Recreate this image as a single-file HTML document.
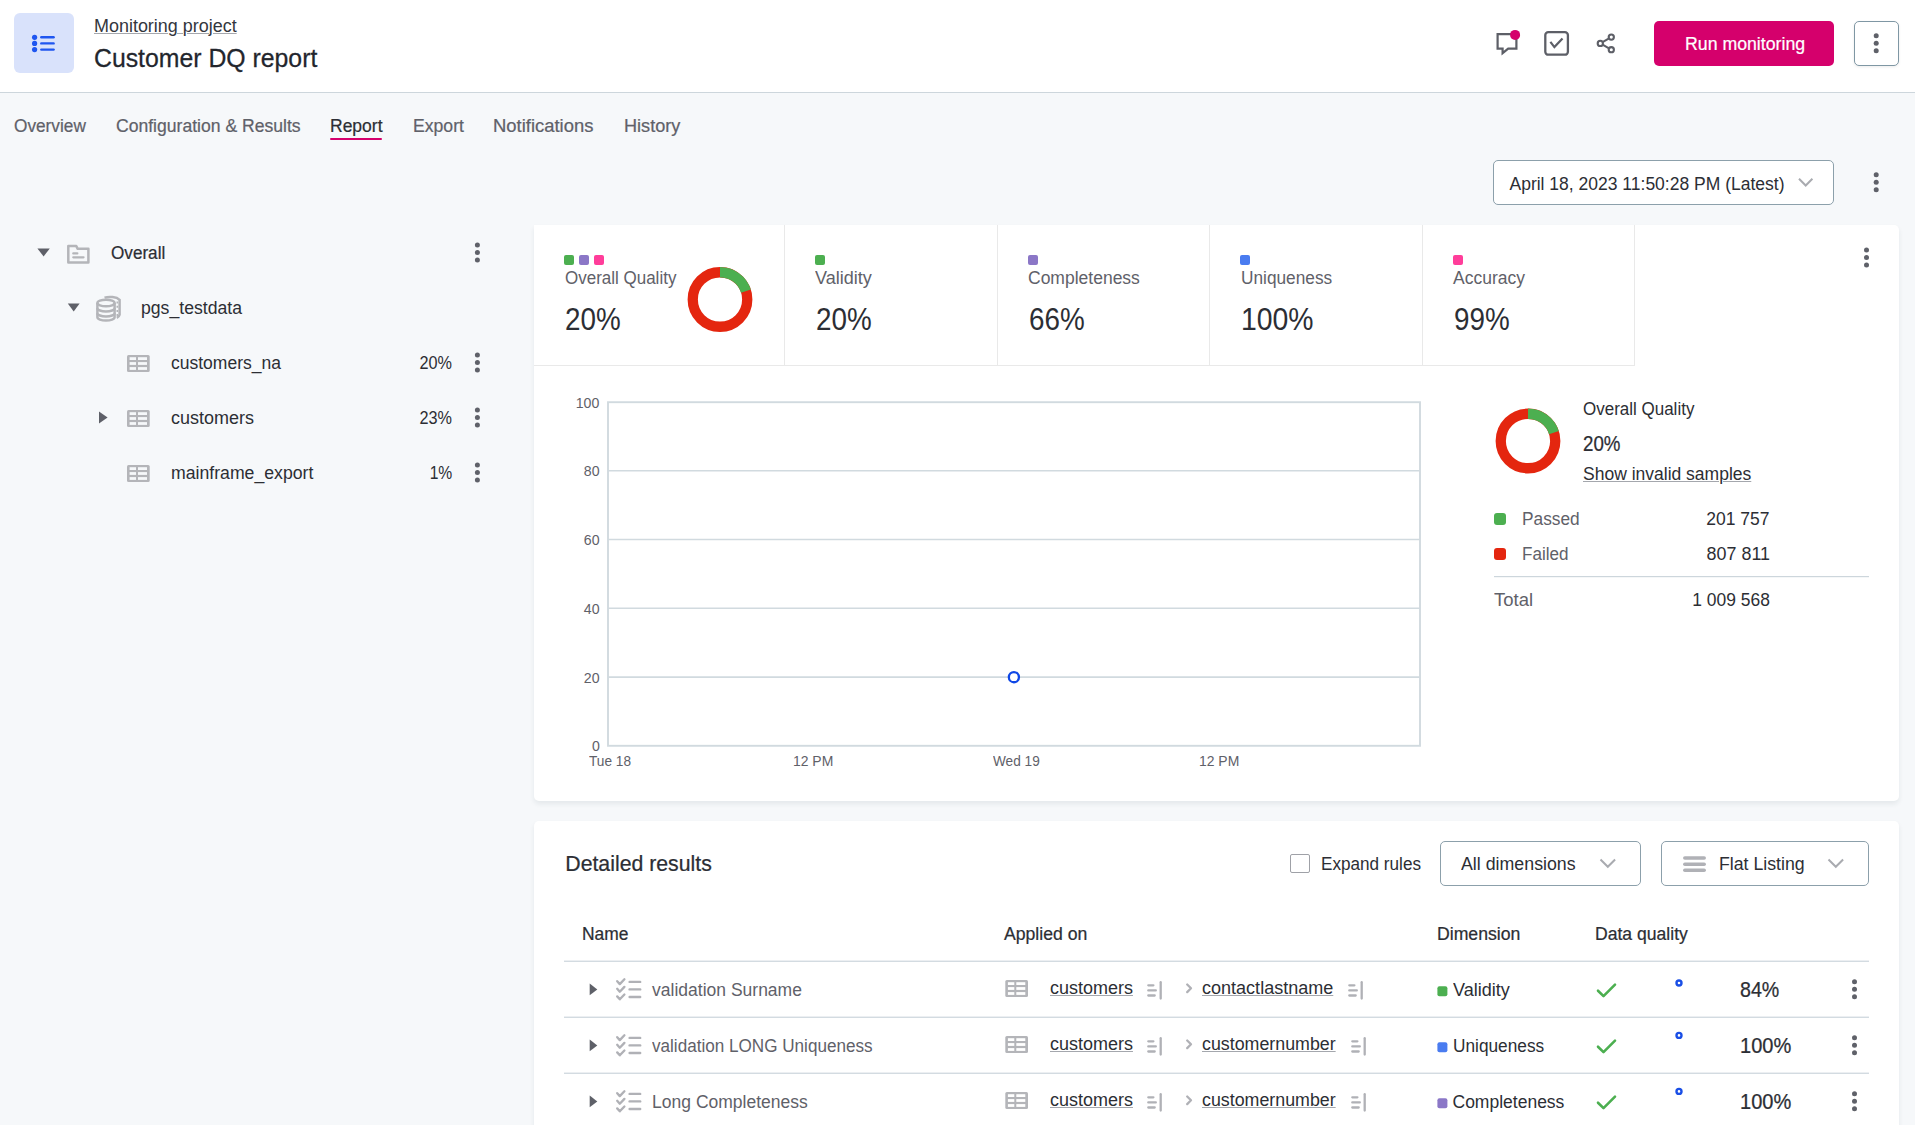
<!DOCTYPE html>
<html><head><meta charset="utf-8">
<style>
*{box-sizing:border-box;margin:0;padding:0}
html,body{width:1915px;height:1125px;overflow:hidden}
body{background:#f6f8fa;font-family:"Liberation Sans",sans-serif;color:#2c2e34;position:relative}
.a{position:absolute}
.t{position:absolute;line-height:1;white-space:nowrap}
.u{text-decoration:underline;text-decoration-color:#a4a7ad;text-underline-offset:1px;text-decoration-thickness:1px}
svg{position:absolute;left:0;top:0;overflow:visible}
</style></head><body>

<div class="a" style="left:0;top:0;width:1915px;height:93px;background:#fff;border-bottom:1px solid #cdd6dc"></div>
<div class="a" style="left:14px;top:13px;width:60px;height:60px;background:#d9e2fb;border-radius:6px"></div>
<div class="a" style="left:1654px;top:21px;width:180px;height:45px;background:#d5006c;border-radius:5px"></div>
<div class="a" style="left:1854px;top:21px;width:45px;height:45px;background:#fff;border:1px solid #7f97a4;border-radius:5px;box-shadow:0 1px 3px rgba(0,0,0,.08)"></div>
<div class="a" style="left:330px;top:138px;width:52px;height:2px;background:#d5006c;border-radius:1px"></div>
<div class="a" style="left:1493px;top:160px;width:341px;height:45px;background:#fff;border:1px solid #8ca0ab;border-radius:5px"></div>
<div class="a" style="left:534px;top:225px;width:1365px;height:576px;background:#fff;border-radius:0 5px 5px 5px;box-shadow:0 3px 5px rgba(30,50,70,.08)"></div>
<div class="a" style="left:534px;top:821px;width:1365px;height:400px;background:#fff;border-radius:5px;box-shadow:0 3px 5px rgba(30,50,70,.08)"></div>
<div class="a" style="left:1290px;top:853.5px;width:19.5px;height:19.5px;border:1.3px solid #9fa1a7;border-radius:2px;background:#fff"></div>
<div class="a" style="left:1440px;top:841px;width:201px;height:45px;border:1px solid #8ca0ab;border-radius:5px;background:#fff"></div>
<div class="a" style="left:1661px;top:841px;width:208px;height:45px;border:1px solid #8ca0ab;border-radius:5px;background:#fff"></div>
<svg width="1915" height="1125">
<g fill="#1f56f0"><circle cx="34.6" cy="37.3" r="2.6"/><circle cx="34.6" cy="43.4" r="2.6"/><circle cx="34.6" cy="49.6" r="2.6"/></g>
<g stroke="#1f56f0" stroke-width="2.4" stroke-linecap="round"><line x1="41.3" y1="37.3" x2="53.6" y2="37.3"/><line x1="41.3" y1="43.4" x2="53.6" y2="43.4"/><line x1="41.3" y1="49.6" x2="53.6" y2="49.6"/></g>
<g transform="translate(1490 25)"><path d="M7.6 9.2 H26.4 V23.6 H18.2 L12.6 28.2 V23.6 H7.6 Z" fill="none" stroke="#5d5f67" stroke-width="2.2"/><circle cx="25.1" cy="9.9" r="5" fill="#d5006c"/><rect x="55.3" y="7.1" width="22.6" height="22.6" rx="3" fill="none" stroke="#5d5f67" stroke-width="2.3"/><path d="M60.4 16.9 L64.4 22.1 L72.5 13.4" fill="none" stroke="#5d5f67" stroke-width="2.2"/><g fill="none" stroke="#5d5f67" stroke-width="2.1"><circle cx="121.3" cy="12.1" r="2.6"/><circle cx="110.3" cy="18.4" r="2.6"/><circle cx="121.3" cy="24.7" r="2.6"/><line x1="112.6" y1="17.1" x2="119" y2="13.4"/><line x1="112.6" y1="19.7" x2="119" y2="23.4"/></g></g>
<g fill="#5f6169"><circle cx="1876.2" cy="35.8" r="2.5"/><circle cx="1876.2" cy="43.3" r="2.5"/><circle cx="1876.2" cy="50.8" r="2.5"/></g>
<path d="M1799 178.8 L1805.7 185.5 L1812.4 178.8" fill="none" stroke="#a9abb0" stroke-width="2"/>
<g fill="#5f6169"><circle cx="1876.2" cy="174.8" r="2.5"/><circle cx="1876.2" cy="182.3" r="2.5"/><circle cx="1876.2" cy="189.8" r="2.5"/></g>
<g fill="#5e6068"><path d="M37.4 248.4 H49.8 L43.6 256.4 Z"/><path d="M67.8 303.4 H79.6 L73.7 311.4 Z"/><path d="M99 411.6 V423.6 L107.6 417.6 Z"/></g>
<g fill="none" stroke="#b4b5b9" stroke-width="2.5" stroke-linejoin="round"><path d="M68.3 246.1 H76.3 L77.7 248.8 H88.4 V262.4 H68.3 Z"/></g>
<g stroke="#b4b5b9" stroke-width="2.3" stroke-linecap="round"><line x1="73.3" y1="253.4" x2="77.3" y2="253.4"/><line x1="73.3" y1="257.3" x2="83.5" y2="257.3"/></g>
<g fill="none" stroke="#b4b5b9" stroke-width="2.5"><path d="M104.5 297.6 C109 296.3 116.5 296.7 119.6 299.8 V314.8 C119.2 316.4 118 317.4 116.8 317.9"/><path d="M117.3 301.5 V316" stroke-width="1.6" stroke-dasharray="2 2.2"/><ellipse cx="106" cy="303" rx="8.6" ry="3.3" fill="#f6f8fa"/><path d="M97.4 303 V317.3 A8.6 3.3 0 0 0 114.6 317.3 V303"/><path d="M97.4 308.2 A8.6 3.3 0 0 0 114.6 308.2"/><path d="M97.4 313.2 A8.6 3.3 0 0 0 114.6 313.2"/></g>
<rect x="127" y="355" width="22.7" height="17" rx="1.5" fill="#b4b5b9"/><rect x="129.60" y="357.20" width="6.4" height="2.8" fill="#f6f8fa"/><rect x="138.00" y="357.20" width="9" height="2.8" fill="#f6f8fa"/><rect x="129.60" y="362.10" width="6.4" height="2.8" fill="#f6f8fa"/><rect x="138.00" y="362.10" width="9" height="2.8" fill="#f6f8fa"/><rect x="129.60" y="367.10" width="6.4" height="2.8" fill="#f6f8fa"/><rect x="138.00" y="367.10" width="9" height="2.8" fill="#f6f8fa"/>
<rect x="127" y="410" width="22.7" height="17" rx="1.5" fill="#b4b5b9"/><rect x="129.60" y="412.20" width="6.4" height="2.8" fill="#f6f8fa"/><rect x="138.00" y="412.20" width="9" height="2.8" fill="#f6f8fa"/><rect x="129.60" y="417.10" width="6.4" height="2.8" fill="#f6f8fa"/><rect x="138.00" y="417.10" width="9" height="2.8" fill="#f6f8fa"/><rect x="129.60" y="422.10" width="6.4" height="2.8" fill="#f6f8fa"/><rect x="138.00" y="422.10" width="9" height="2.8" fill="#f6f8fa"/>
<rect x="127" y="465" width="22.7" height="17" rx="1.5" fill="#b4b5b9"/><rect x="129.60" y="467.20" width="6.4" height="2.8" fill="#f6f8fa"/><rect x="138.00" y="467.20" width="9" height="2.8" fill="#f6f8fa"/><rect x="129.60" y="472.10" width="6.4" height="2.8" fill="#f6f8fa"/><rect x="138.00" y="472.10" width="9" height="2.8" fill="#f6f8fa"/><rect x="129.60" y="477.10" width="6.4" height="2.8" fill="#f6f8fa"/><rect x="138.00" y="477.10" width="9" height="2.8" fill="#f6f8fa"/>
<g fill="#5f6169"><circle cx="477.4" cy="245.0" r="2.5"/><circle cx="477.4" cy="252.5" r="2.5"/><circle cx="477.4" cy="260.0" r="2.5"/></g>
<g fill="#5f6169"><circle cx="477.4" cy="355.0" r="2.5"/><circle cx="477.4" cy="362.5" r="2.5"/><circle cx="477.4" cy="370.0" r="2.5"/></g>
<g fill="#5f6169"><circle cx="477.4" cy="410.0" r="2.5"/><circle cx="477.4" cy="417.5" r="2.5"/><circle cx="477.4" cy="425.0" r="2.5"/></g>
<g fill="#5f6169"><circle cx="477.4" cy="465.0" r="2.5"/><circle cx="477.4" cy="472.5" r="2.5"/><circle cx="477.4" cy="480.0" r="2.5"/></g>
<g fill="#e9e9e9"><rect x="784" y="225" width="1" height="140"/><rect x="997" y="225" width="1" height="140"/><rect x="1209" y="225" width="1" height="140"/><rect x="1422" y="225" width="1" height="140"/><rect x="1634" y="225" width="1" height="141"/><rect x="534" y="365" width="1100" height="1"/></g>
<rect x="564" y="255" width="10" height="10" rx="2" fill="#4caf50"/>
<rect x="579" y="255" width="10" height="10" rx="2" fill="#8b77c7"/>
<rect x="594" y="255" width="10" height="10" rx="2" fill="#ff3d9a"/>
<rect x="815" y="255" width="10" height="10" rx="2" fill="#4caf50"/>
<rect x="1028" y="255" width="10" height="10" rx="2" fill="#8b77c7"/>
<rect x="1240" y="255" width="10" height="10" rx="2" fill="#4a7cf0"/>
<rect x="1453" y="255" width="10" height="10" rx="2" fill="#ff3d9a"/>
<circle cx="720" cy="299.5" r="27.25" fill="none" stroke="#e4260f" stroke-width="10.3"/><path d="M720 272.25 A27.25 27.25 0 0 1 745.92 291.08" fill="none" stroke="#4caf50" stroke-width="10.3"/>
<g fill="#5f6169"><circle cx="1866.5" cy="250.0" r="2.5"/><circle cx="1866.5" cy="257.5" r="2.5"/><circle cx="1866.5" cy="265.0" r="2.5"/></g>
<g stroke="#d1dadf" stroke-width="1.6" fill="none"><line x1="608" y1="470.8" x2="1420" y2="470.8"/><line x1="608" y1="539.5" x2="1420" y2="539.5"/><line x1="608" y1="608.3" x2="1420" y2="608.3"/><line x1="608" y1="677.1" x2="1420" y2="677.1"/><rect x="608" y="402.2" width="812" height="343.6" stroke-width="1.9"/></g>
<circle cx="1013.9" cy="677.2" r="5.05" fill="#fff" stroke="#0f47e6" stroke-width="2.3"/>
<circle cx="1528" cy="441" r="27.25" fill="none" stroke="#e4260f" stroke-width="10.3"/><path d="M1528 413.75 A27.25 27.25 0 0 1 1553.92 432.58" fill="none" stroke="#4caf50" stroke-width="10.3"/>
<rect x="1494" y="513" width="12" height="12" rx="3" fill="#4caf50"/>
<rect x="1494" y="548" width="12" height="12" rx="3" fill="#e4260f"/>
<rect x="1494" y="576" width="375" height="1.2" fill="#cdd6dc"/>
<path d="M1600.5 859.5 L1607.8 866.8 L1615.1 859.5" fill="none" stroke="#a9abb0" stroke-width="2"/>
<path d="M1828.5 859.5 L1835.8 866.8 L1843.1 859.5" fill="none" stroke="#a9abb0" stroke-width="2"/>
<g stroke="#b0b1b6" stroke-width="3.5" stroke-linecap="round"><line x1="1684.8" y1="858" x2="1704.2" y2="858"/><line x1="1684.8" y1="864.2" x2="1704.2" y2="864.2"/><line x1="1684.8" y1="870.3" x2="1704.2" y2="870.3"/></g>
<g fill="#cfd8de"><rect x="564" y="960.6" width="1305" height="1.3"/><rect x="564" y="1016.6" width="1305" height="1.3"/><rect x="564" y="1072.6" width="1305" height="1.3"/></g>
<path d="M589.7 983.5 V995.3 L597.3 989.4 Z" fill="#5e6068"/>
<g fill="none" stroke="#b0b1b6" stroke-width="2.35" stroke-linecap="round" stroke-linejoin="round"><path d="M617.2 981.2 L619.8 984.1 L624.4 979.3"/><path d="M617.2 988.8 L619.8 991.7 L624.4 986.9"/><path d="M617.2 996.4 L619.8 999.3 L624.4 994.5"/><line x1="629.6" y1="981.9" x2="640.2" y2="981.9"/><line x1="629.6" y1="989.4" x2="640.2" y2="989.4"/><line x1="629.6" y1="997" x2="640.2" y2="997"/></g>
<rect x="1005.3" y="980" width="22.7" height="17" rx="1.5" fill="#b4b5b9"/><rect x="1007.90" y="982.20" width="6.4" height="2.8" fill="#fff"/><rect x="1016.30" y="982.20" width="9" height="2.8" fill="#fff"/><rect x="1007.90" y="987.10" width="6.4" height="2.8" fill="#fff"/><rect x="1016.30" y="987.10" width="9" height="2.8" fill="#fff"/><rect x="1007.90" y="992.10" width="6.4" height="2.8" fill="#fff"/><rect x="1016.30" y="992.10" width="9" height="2.8" fill="#fff"/>
<g fill="none" stroke="#b0b1b6" stroke-width="2.3" stroke-linecap="round"><line x1="1148.3" y1="985.3" x2="1153.4" y2="985.3"/><line x1="1148.3" y1="990.4" x2="1155.8" y2="990.4"/><line x1="1148.3" y1="995.5" x2="1154.7" y2="995.5"/><line x1="1160.7" y1="982.2" x2="1160.7" y2="998.6"/></g>
<g fill="none" stroke="#b0b1b6" stroke-width="2.3" stroke-linecap="round"><line x1="1349.3" y1="985.3" x2="1354.4" y2="985.3"/><line x1="1349.3" y1="990.4" x2="1356.8" y2="990.4"/><line x1="1349.3" y1="995.5" x2="1355.7" y2="995.5"/><line x1="1361.7" y1="982.2" x2="1361.7" y2="998.6"/></g>
<path d="M1187.2 984.5 L1191 988.3 L1187.2 992.1" fill="none" stroke="#b0b1b6" stroke-width="2.3" stroke-linecap="round" stroke-linejoin="round"/>
<rect x="1437.4" y="986.3" width="10" height="10" rx="2" fill="#4caf50"/>
<path d="M1598 990.7 L1603.5 996.1 L1615 984.6" fill="none" stroke="#4caf50" stroke-width="2.6" stroke-linecap="round" stroke-linejoin="round"/>
<circle cx="1679" cy="983" r="2.5" fill="none" stroke="#1a4fe6" stroke-width="2.4"/>
<g fill="#5f6169"><circle cx="1854.5" cy="981.8" r="2.5"/><circle cx="1854.5" cy="989.3" r="2.5"/><circle cx="1854.5" cy="996.8" r="2.5"/></g>
<path d="M589.7 1039.5 V1051.3 L597.3 1045.4 Z" fill="#5e6068"/>
<g fill="none" stroke="#b0b1b6" stroke-width="2.35" stroke-linecap="round" stroke-linejoin="round"><path d="M617.2 1037.2 L619.8 1040.1 L624.4 1035.3"/><path d="M617.2 1044.8 L619.8 1047.7 L624.4 1042.9"/><path d="M617.2 1052.4 L619.8 1055.3 L624.4 1050.5"/><line x1="629.6" y1="1037.9" x2="640.2" y2="1037.9"/><line x1="629.6" y1="1045.4" x2="640.2" y2="1045.4"/><line x1="629.6" y1="1053" x2="640.2" y2="1053"/></g>
<rect x="1005.3" y="1036" width="22.7" height="17" rx="1.5" fill="#b4b5b9"/><rect x="1007.90" y="1038.20" width="6.4" height="2.8" fill="#fff"/><rect x="1016.30" y="1038.20" width="9" height="2.8" fill="#fff"/><rect x="1007.90" y="1043.10" width="6.4" height="2.8" fill="#fff"/><rect x="1016.30" y="1043.10" width="9" height="2.8" fill="#fff"/><rect x="1007.90" y="1048.10" width="6.4" height="2.8" fill="#fff"/><rect x="1016.30" y="1048.10" width="9" height="2.8" fill="#fff"/>
<g fill="none" stroke="#b0b1b6" stroke-width="2.3" stroke-linecap="round"><line x1="1148.3" y1="1041.3" x2="1153.4" y2="1041.3"/><line x1="1148.3" y1="1046.4" x2="1155.8" y2="1046.4"/><line x1="1148.3" y1="1051.5" x2="1154.7" y2="1051.5"/><line x1="1160.7" y1="1038.2" x2="1160.7" y2="1054.6"/></g>
<g fill="none" stroke="#b0b1b6" stroke-width="2.3" stroke-linecap="round"><line x1="1352.3" y1="1041.3" x2="1357.4" y2="1041.3"/><line x1="1352.3" y1="1046.4" x2="1359.8" y2="1046.4"/><line x1="1352.3" y1="1051.5" x2="1358.7" y2="1051.5"/><line x1="1364.7" y1="1038.2" x2="1364.7" y2="1054.6"/></g>
<path d="M1187.2 1040.5 L1191 1044.3 L1187.2 1048.1" fill="none" stroke="#b0b1b6" stroke-width="2.3" stroke-linecap="round" stroke-linejoin="round"/>
<rect x="1437.4" y="1042.3" width="10" height="10" rx="2" fill="#4a7cf0"/>
<path d="M1598 1046.7 L1603.5 1052.1 L1615 1040.6" fill="none" stroke="#4caf50" stroke-width="2.6" stroke-linecap="round" stroke-linejoin="round"/>
<circle cx="1679" cy="1035.4" r="2.5" fill="none" stroke="#1a4fe6" stroke-width="2.4"/>
<g fill="#5f6169"><circle cx="1854.5" cy="1037.8" r="2.5"/><circle cx="1854.5" cy="1045.3" r="2.5"/><circle cx="1854.5" cy="1052.8" r="2.5"/></g>
<path d="M589.7 1095.5 V1107.3 L597.3 1101.4 Z" fill="#5e6068"/>
<g fill="none" stroke="#b0b1b6" stroke-width="2.35" stroke-linecap="round" stroke-linejoin="round"><path d="M617.2 1093.2 L619.8 1096.1 L624.4 1091.3"/><path d="M617.2 1100.8 L619.8 1103.7 L624.4 1098.9"/><path d="M617.2 1108.4 L619.8 1111.3 L624.4 1106.5"/><line x1="629.6" y1="1093.9" x2="640.2" y2="1093.9"/><line x1="629.6" y1="1101.4" x2="640.2" y2="1101.4"/><line x1="629.6" y1="1109" x2="640.2" y2="1109"/></g>
<rect x="1005.3" y="1092" width="22.7" height="17" rx="1.5" fill="#b4b5b9"/><rect x="1007.90" y="1094.20" width="6.4" height="2.8" fill="#fff"/><rect x="1016.30" y="1094.20" width="9" height="2.8" fill="#fff"/><rect x="1007.90" y="1099.10" width="6.4" height="2.8" fill="#fff"/><rect x="1016.30" y="1099.10" width="9" height="2.8" fill="#fff"/><rect x="1007.90" y="1104.10" width="6.4" height="2.8" fill="#fff"/><rect x="1016.30" y="1104.10" width="9" height="2.8" fill="#fff"/>
<g fill="none" stroke="#b0b1b6" stroke-width="2.3" stroke-linecap="round"><line x1="1148.3" y1="1097.3" x2="1153.4" y2="1097.3"/><line x1="1148.3" y1="1102.4" x2="1155.8" y2="1102.4"/><line x1="1148.3" y1="1107.5" x2="1154.7" y2="1107.5"/><line x1="1160.7" y1="1094.2" x2="1160.7" y2="1110.6"/></g>
<g fill="none" stroke="#b0b1b6" stroke-width="2.3" stroke-linecap="round"><line x1="1352.3" y1="1097.3" x2="1357.4" y2="1097.3"/><line x1="1352.3" y1="1102.4" x2="1359.8" y2="1102.4"/><line x1="1352.3" y1="1107.5" x2="1358.7" y2="1107.5"/><line x1="1364.7" y1="1094.2" x2="1364.7" y2="1110.6"/></g>
<path d="M1187.2 1096.5 L1191 1100.3 L1187.2 1104.1" fill="none" stroke="#b0b1b6" stroke-width="2.3" stroke-linecap="round" stroke-linejoin="round"/>
<rect x="1437.4" y="1098.3" width="10" height="10" rx="2" fill="#8b77c7"/>
<path d="M1598 1102.7 L1603.5 1108.1 L1615 1096.6" fill="none" stroke="#4caf50" stroke-width="2.6" stroke-linecap="round" stroke-linejoin="round"/>
<circle cx="1679" cy="1091.4" r="2.5" fill="none" stroke="#1a4fe6" stroke-width="2.4"/>
<g fill="#5f6169"><circle cx="1854.5" cy="1093.8" r="2.5"/><circle cx="1854.5" cy="1101.3" r="2.5"/><circle cx="1854.5" cy="1108.8" r="2.5"/></g>
</svg>
<div class="t u" style="top:18.00px;font-size:17.50px;color:#33363d;left:94.40px;transform-origin:0 0;transform:scaleX(1.0256);">Monitoring project</div>
<div class="t" style="top:46.00px;font-size:25.00px;color:#23262d;-webkit-text-stroke:0.26px #23262d;left:94.40px;transform-origin:0 0;transform:scaleX(0.9922);">Customer DQ report</div>
<div class="t" style="top:36.00px;font-size:17.50px;color:#ffffff;-webkit-text-stroke:0.22px #ffffff;left:1684.50px;transform-origin:0 0;transform:scaleX(1.0118);">Run monitoring</div>
<div class="t" style="top:118.00px;font-size:17.50px;color:#5f6169;-webkit-text-stroke:0.22px #5f6169;left:14.00px;transform-origin:0 0;transform:scaleX(0.9851);">Overview</div>
<div class="t" style="top:118.00px;font-size:17.50px;color:#5f6169;-webkit-text-stroke:0.22px #5f6169;left:115.50px;transform-origin:0 0;transform:scaleX(1.0040);">Configuration &amp; Results</div>
<div class="t" style="top:118.00px;font-size:17.50px;color:#2c2e34;-webkit-text-stroke:0.22px #2c2e34;left:330.00px;transform-origin:0 0;">Report</div>
<div class="t" style="top:118.00px;font-size:17.50px;color:#5f6169;-webkit-text-stroke:0.22px #5f6169;left:413.00px;transform-origin:0 0;transform:scaleX(1.0063);">Export</div>
<div class="t" style="top:118.00px;font-size:17.50px;color:#5f6169;-webkit-text-stroke:0.22px #5f6169;left:493.40px;transform-origin:0 0;transform:scaleX(1.0532);">Notifications</div>
<div class="t" style="top:118.00px;font-size:17.50px;color:#5f6169;-webkit-text-stroke:0.22px #5f6169;left:624.00px;transform-origin:0 0;transform:scaleX(1.0349);">History</div>
<div class="t" style="top:176.00px;font-size:17.50px;color:#2c2e34;left:1509.50px;transform-origin:0 0;">April 18, 2023 11:50:28 PM (Latest)</div>
<div class="t" style="top:245.00px;font-size:17.50px;color:#2c2e34;-webkit-text-stroke:0.22px #2c2e34;left:111.00px;transform-origin:0 0;transform:scaleX(0.9784);">Overall</div>
<div class="t" style="top:300.00px;font-size:17.50px;color:#2c2e34;left:141.00px;transform-origin:0 0;transform:scaleX(1.0076);">pgs_testdata</div>
<div class="t" style="top:355.00px;font-size:17.50px;color:#2c2e34;left:171.00px;transform-origin:0 0;">customers_na</div>
<div class="t" style="top:410.00px;font-size:17.50px;color:#2c2e34;left:171.00px;transform-origin:0 0;transform:scaleX(1.0278);">customers</div>
<div class="t" style="top:465.00px;font-size:17.50px;color:#2c2e34;left:171.00px;transform-origin:0 0;transform:scaleX(1.0093);">mainframe_export</div>
<div class="t" style="top:355.00px;font-size:17.50px;color:#2c2e34;right:1462.50px;transform-origin:100% 0;transform:scaleX(0.9276);">20%</div>
<div class="t" style="top:410.00px;font-size:17.50px;color:#2c2e34;right:1462.50px;transform-origin:100% 0;transform:scaleX(0.9276);">23%</div>
<div class="t" style="top:465.00px;font-size:17.50px;color:#2c2e34;right:1462.50px;transform-origin:100% 0;transform:scaleX(0.8957);">1%</div>
<div class="t" style="top:270.00px;font-size:17.50px;color:#5f6169;left:564.80px;transform-origin:0 0;transform:scaleX(0.9705);">Overall Quality</div>
<div class="t" style="top:304.00px;font-size:31.00px;color:#2c2e34;left:565.30px;transform-origin:0 0;transform:scaleX(0.8976);">20%</div>
<div class="t" style="top:270.00px;font-size:17.50px;color:#5f6169;left:815.30px;transform-origin:0 0;transform:scaleX(1.0325);">Validity</div>
<div class="t" style="top:304.00px;font-size:31.00px;color:#2c2e34;left:815.80px;transform-origin:0 0;transform:scaleX(0.8976);">20%</div>
<div class="t" style="top:270.00px;font-size:17.50px;color:#5f6169;left:1028.00px;transform-origin:0 0;">Completeness</div>
<div class="t" style="top:304.00px;font-size:31.00px;color:#2c2e34;left:1028.50px;transform-origin:0 0;transform:scaleX(0.8976);">66%</div>
<div class="t" style="top:270.00px;font-size:17.50px;color:#5f6169;left:1240.50px;transform-origin:0 0;transform:scaleX(0.9862);">Uniqueness</div>
<div class="t" style="top:304.00px;font-size:31.00px;color:#2c2e34;left:1241.00px;transform-origin:0 0;transform:scaleX(0.9151);">100%</div>
<div class="t" style="top:270.00px;font-size:17.50px;color:#5f6169;left:1453.00px;transform-origin:0 0;">Accuracy</div>
<div class="t" style="top:304.00px;font-size:31.00px;color:#2c2e34;left:1453.50px;transform-origin:0 0;transform:scaleX(0.8976);">99%</div>
<div class="t" style="top:396.00px;font-size:14.00px;color:#5f6169;right:1315.50px;transform-origin:100% 12px;transform:scale(1.0105,1.1000);">100</div>
<div class="t" style="top:464.00px;font-size:14.00px;color:#5f6169;right:1315.50px;transform-origin:100% 12px;transform:scale(1.0105,1.1000);">80</div>
<div class="t" style="top:533.00px;font-size:14.00px;color:#5f6169;right:1315.50px;transform-origin:100% 12px;transform:scale(1.0105,1.1000);">60</div>
<div class="t" style="top:602.00px;font-size:14.00px;color:#5f6169;right:1315.50px;transform-origin:100% 12px;transform:scale(1.0105,1.1000);">40</div>
<div class="t" style="top:671.00px;font-size:14.00px;color:#5f6169;right:1315.50px;transform-origin:100% 12px;transform:scale(1.0105,1.1000);">20</div>
<div class="t" style="top:739.00px;font-size:14.00px;color:#5f6169;right:1315.50px;transform-origin:100% 12px;transform:scale(1.0104,1.1000);">0</div>
<div class="t" style="top:754.00px;font-size:14.00px;color:#5f6169;left:589.47px;transform-origin:0 12px;transform:scale(0.9765,1.1000);">Tue 18</div>
<div class="t" style="top:754.00px;font-size:14.00px;color:#5f6169;left:793.37px;transform-origin:0 12px;transform:scale(0.9951,1.1000);">12 PM</div>
<div class="t" style="top:754.00px;font-size:14.00px;color:#5f6169;left:993.13px;transform-origin:0 12px;transform:scale(0.9738,1.1000);">Wed 19</div>
<div class="t" style="top:754.00px;font-size:14.00px;color:#5f6169;left:1199.37px;transform-origin:0 12px;transform:scale(0.9951,1.1000);">12 PM</div>
<div class="t" style="top:401.00px;font-size:17.50px;color:#2c2e34;left:1583.00px;transform-origin:0 0;transform:scaleX(0.9705);">Overall Quality</div>
<div class="t" style="top:434.00px;font-size:21.25px;color:#2c2e34;-webkit-text-stroke:0.24px #2c2e34;left:1583.00px;transform-origin:0 0;transform:scaleX(0.8808);">20%</div>
<div class="t u" style="top:466.00px;font-size:17.50px;color:#2c2e34;left:1583.00px;transform-origin:0 0;">Show invalid samples</div>
<div class="t" style="top:511.00px;font-size:17.50px;color:#5f6169;left:1521.60px;transform-origin:0 0;transform:scaleX(0.9881);">Passed</div>
<div class="t" style="top:511.00px;font-size:17.50px;color:#2c2e34;right:145.50px;transform-origin:100% 0;">201 757</div>
<div class="t" style="top:546.00px;font-size:17.50px;color:#5f6169;left:1521.60px;transform-origin:0 0;transform:scaleX(0.9769);">Failed</div>
<div class="t" style="top:546.00px;font-size:17.50px;color:#2c2e34;right:145.50px;transform-origin:100% 0;transform:scaleX(1.0225);">807 811</div>
<div class="t" style="top:592.00px;font-size:17.50px;color:#5f6169;left:1494.00px;transform-origin:0 0;transform:scaleX(1.0571);">Total</div>
<div class="t" style="top:592.00px;font-size:17.50px;color:#2c2e34;right:145.50px;transform-origin:100% 0;transform:scaleX(0.9959);">1 009 568</div>
<div class="t" style="top:854.00px;font-size:21.25px;color:#2c2e34;-webkit-text-stroke:0.24px #2c2e34;left:565.30px;transform-origin:0 0;">Detailed results</div>
<div class="t" style="top:856.00px;font-size:17.50px;color:#2c2e34;left:1320.70px;transform-origin:0 0;transform:scaleX(0.9789);">Expand rules</div>
<div class="t" style="top:856.00px;font-size:17.50px;color:#2c2e34;left:1461.20px;transform-origin:0 0;transform:scaleX(1.0161);">All dimensions</div>
<div class="t" style="top:856.00px;font-size:17.50px;color:#2c2e34;left:1718.80px;transform-origin:0 0;transform:scaleX(1.0127);">Flat Listing</div>
<div class="t" style="top:926.00px;font-size:17.50px;color:#2c2e34;-webkit-text-stroke:0.22px #2c2e34;left:582.20px;transform-origin:0 0;transform:scaleX(0.9954);">Name</div>
<div class="t" style="top:926.00px;font-size:17.50px;color:#2c2e34;-webkit-text-stroke:0.22px #2c2e34;left:1004.40px;transform-origin:0 0;transform:scaleX(1.0072);">Applied on</div>
<div class="t" style="top:926.00px;font-size:17.50px;color:#2c2e34;-webkit-text-stroke:0.22px #2c2e34;left:1437.40px;transform-origin:0 0;transform:scaleX(1.0086);">Dimension</div>
<div class="t" style="top:926.00px;font-size:17.50px;color:#2c2e34;-webkit-text-stroke:0.22px #2c2e34;left:1594.80px;transform-origin:0 0;transform:scaleX(1.0048);">Data quality</div>
<div class="t" style="top:982.00px;font-size:17.50px;color:#5f6169;left:652.10px;transform-origin:0 0;">validation Surname</div>
<div class="t u" style="top:980.00px;font-size:17.50px;color:#2c2e34;left:1049.60px;transform-origin:0 0;transform:scaleX(1.0278);">customers</div>
<div class="t u" style="top:980.00px;font-size:17.50px;color:#2c2e34;left:1202.40px;transform-origin:0 0;transform:scaleX(1.0302);">contactlastname</div>
<div class="t" style="top:982.00px;font-size:17.50px;color:#2c2e34;left:1452.50px;transform-origin:0 0;transform:scaleX(1.0325);">Validity</div>
<div class="t" style="top:980.00px;font-size:21.25px;color:#2c2e34;-webkit-text-stroke:0.24px #2c2e34;left:1740.30px;transform-origin:0 0;transform:scaleX(0.9248);">84%</div>
<div class="t" style="top:1038.00px;font-size:17.50px;color:#5f6169;left:652.10px;transform-origin:0 0;transform:scaleX(0.9772);">validation LONG Uniqueness</div>
<div class="t u" style="top:1036.00px;font-size:17.50px;color:#2c2e34;left:1049.60px;transform-origin:0 0;transform:scaleX(1.0278);">customers</div>
<div class="t u" style="top:1036.00px;font-size:17.50px;color:#2c2e34;left:1202.40px;transform-origin:0 0;transform:scaleX(1.0177);">customernumber</div>
<div class="t" style="top:1038.00px;font-size:17.50px;color:#2c2e34;left:1452.50px;transform-origin:0 0;transform:scaleX(0.9862);">Uniqueness</div>
<div class="t" style="top:1036.00px;font-size:21.25px;color:#2c2e34;-webkit-text-stroke:0.24px #2c2e34;left:1740.30px;transform-origin:0 0;transform:scaleX(0.9433);">100%</div>
<div class="t" style="top:1094.00px;font-size:17.50px;color:#5f6169;left:652.10px;transform-origin:0 0;">Long Completeness</div>
<div class="t u" style="top:1092.00px;font-size:17.50px;color:#2c2e34;left:1049.60px;transform-origin:0 0;transform:scaleX(1.0278);">customers</div>
<div class="t u" style="top:1092.00px;font-size:17.50px;color:#2c2e34;left:1202.40px;transform-origin:0 0;transform:scaleX(1.0177);">customernumber</div>
<div class="t" style="top:1094.00px;font-size:17.50px;color:#2c2e34;left:1452.50px;transform-origin:0 0;">Completeness</div>
<div class="t" style="top:1092.00px;font-size:21.25px;color:#2c2e34;-webkit-text-stroke:0.24px #2c2e34;left:1740.30px;transform-origin:0 0;transform:scaleX(0.9433);">100%</div>
</body></html>
